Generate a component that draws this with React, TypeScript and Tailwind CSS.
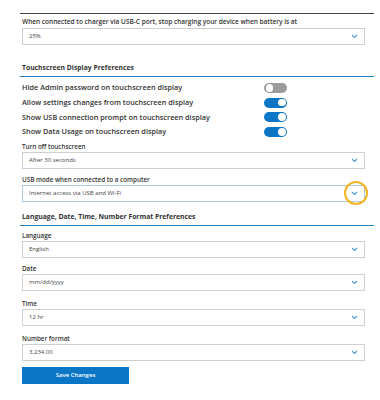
import React from 'react';

const Chevron: React.FC = () => (
  <svg width="7" height="5" viewBox="0 0 7 5" className="shrink-0">
    <polyline points="1,1 3.5,3.5 6,1" fill="none" stroke="#4b9cd3" strokeWidth="1.1" />
  </svg>
);

const Select: React.FC<{ value: string; focused?: boolean; marked?: boolean }> = ({ value, focused, marked }) => (
  <div
    className={`relative ml-[2px] w-[343px] h-[17px] bg-white border flex items-center justify-between pl-[6px] pr-[6px] text-[6px] text-[#444] ${
      focused ? 'border-[#a9cbe3]' : 'border-[#cfcfcf]'
    }`}
  >
    <span>{value}</span>
    <Chevron />
    {marked && (
      <div className="absolute left-[321px] top-[-4.5px] w-[24px] h-[24px] rounded-full border-2 border-[#f1b321]" />
    )}
  </div>
);

const Field: React.FC<{ label: string; value: string; className?: string; focused?: boolean; marked?: boolean }> = ({
  label,
  value,
  className = '',
  focused,
  marked,
}) => (
  <div className={className}>
    <div className="pl-[2px] h-[10px] leading-[10px] text-[6.3px] font-semibold text-[#333]">{label}</div>
    <Select value={value} focused={focused} marked={marked} />
  </div>
);

const Heading: React.FC<{ title: string; className?: string }> = ({ title, className = '' }) => (
  <div className={`pl-[2px] pb-[3px] border-b-[1.5px] border-[#1f7db8] ${className}`}>
    <div className="h-[10px] leading-[10px] text-[6.8px] font-bold text-[#333]">{title}</div>
  </div>
);

const Toggle: React.FC<{ on: boolean }> = ({ on }) => (
  <div
    className={`w-[23px] h-[10px] rounded-full flex items-center px-[1.5px] ${
      on ? 'bg-[#0a76c5] justify-end' : 'bg-[#9b9b9b] justify-start'
    }`}
  >
    <div className="w-[7.5px] h-[7.5px] rounded-full bg-white" />
  </div>
);

const toggles = [
  { label: 'Hide Admin password on touchscreen display', on: false },
  { label: 'Allow settings changes from touchscreen display', on: true },
  { label: 'Show USB connection prompt on touchscreen display', on: true },
  { label: 'Show Data Usage on touchscreen display', on: true },
];

export default function App() {
  return (
    <div className="w-[380px] h-[400px] bg-white overflow-hidden font-['Open_Sans',sans-serif] text-[#333]">
      <div className="ml-[20px] w-[354px] pt-[13px]">
        {/* Charging limit */}
        <div className="border-t border-[#444] pt-[3px]">
          <div className="pl-[2px] h-[10px] leading-[10px] text-[6.5px] font-semibold">
            When connected to charger via USB-C port, stop charging your device when battery is at
          </div>
          <div className="mt-[1px]">
            <Select value="25%" />
          </div>
        </div>

        {/* Touchscreen */}
        <Heading title="Touchscreen Display Preferences" className="mt-[18px]" />
        <div className="mt-[3.5px]">
          {toggles.map((t) => (
            <div key={t.label} className="flex items-center h-[14.7px]">
              <div className="w-[244px] pl-[2px] text-[7.3px] font-semibold text-[#333] leading-none">{t.label}</div>
              <Toggle on={t.on} />
            </div>
          ))}
        </div>
        <Field label="Turn off touchscreen" value="After 30 seconds" className="mt-[2.5px]" />
        <Field
          label="USB mode when connected to a computer"
          value="Internet access via USB and Wi-Fi"
          className="mt-[6px]"
          focused
          marked
        />

        {/* Language etc */}
        <Heading title="Language, Date, Time, Number Format Preferences" className="mt-[10px]" />
        <Field label="Language" value="English" className="mt-[5px]" />
        <Field label="Date" value="mm/dd/yyyy" className="mt-[6px]" />
        <Field label="Time" value="12 hr" className="mt-[8px]" />
        <Field label="Number format" value="3,234.00" className="mt-[8px]" />

        <button className="mt-[6px] ml-[2px] w-[107px] h-[17px] bg-[#0a76c5] text-white text-[6px] font-semibold flex items-center justify-center">
          Save Changes
        </button>
      </div>
    </div>
  );
}
